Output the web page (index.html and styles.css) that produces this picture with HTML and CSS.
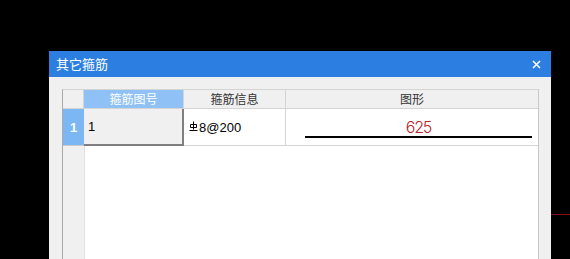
FILE: index.html
```html
<!DOCTYPE html>
<html lang="zh">
<head>
<meta charset="utf-8">
<title>其它箍筋</title>
<link rel="stylesheet" href="styles.css">
</head>
<body>
<div class="stage">
  <div class="redline"></div>
  <div class="dialog">
    <div class="titlebar">
      <span class="title">其它箍筋</span>
      <svg class="close" width="9" height="9" viewBox="0 0 9 9"><path d="M1 1 L8 8 M8 1 L1 8" stroke="#fff" stroke-width="1.5" fill="none"/></svg>
    </div>
    <div class="body">
      <div class="grid">
        <div class="row head">
          <div class="cell corner"></div>
          <div class="cell hsel">箍筋图号</div>
          <div class="cell">箍筋信息</div>
          <div class="cell last">图形</div>
        </div>
        <div class="row data">
          <div class="cell rownum">1</div>
          <div class="cell sel">1</div>
          <div class="cell info"><svg class="rebar" width="9" height="11" viewBox="0 0 9 11"><path d="M4.5 0.5 V8.5 M1.5 3.5 H7.5 V6.5 H1.5 Z M0.5 9.5 H8.5" stroke="#000" stroke-width="1" fill="none"/></svg><span>8@200</span></div>
          <div class="cell shape last"><span class="len">625</span><div class="bar"></div></div>
        </div>
        <div class="rest">
          <div class="restnum"></div>
          <div class="restfill"></div>
        </div>
      </div>
    </div>
  </div>
</div>
</body>
</html>
```
FILE: styles.css
```css
html, body {
  margin: 0;
  padding: 0;
  background: #000;
}
.stage {
  position: relative;
  width: 570px;
  height: 259px;
  overflow: hidden;
  padding-top: 51px;
  box-sizing: border-box;
  font-family: "Noto Sans CJK SC", "Liberation Sans", sans-serif;
}
.redline {
  position: absolute;
  left: 545px;
  top: 214px;
  width: 25px;
  height: 1px;
  background: #8a0c12;
}
.dialog {
  position: relative;
  margin-left: 49px;
  width: 502px;
  height: 208px;
  background: #f0f0f0;
  display: flex;
  flex-direction: column;
}
.titlebar {
  height: 26px;
  flex: none;
  background: #2c7fe1;
  display: flex;
  align-items: center;
  justify-content: space-between;
  padding: 0 10px 0 7px;
}
.title {
  color: #fff;
  font-size: 13px;
  line-height: 16px;
}
.close {
  display: block;
}
.body {
  flex: 1;
  padding: 12px 12px 0 13px;
  display: flex;
  min-height: 0;
}
.grid {
  width: 477px;
  box-sizing: border-box;
  border-left: 1px solid #a9a9a9;
  border-right: 1px solid #c8c8c8;
  border-top: 1px solid #d4d4d4;
  background: #fff;
  display: flex;
  flex-direction: column;
}
.row {
  display: grid;
  grid-template-columns: 21px 100px 102px 252px;
  flex: none;
}
.head {
  height: 19px;
}
.head .cell {
  background: #f0f0f0;
  border-right: 1px solid #d4d4d4;
  border-bottom: 1px solid #d4d4d4;
  box-sizing: border-box;
  font-size: 12px;
  color: #333;
  display: flex;
  align-items: center;
  justify-content: center;
  line-height: 14px;
}
.head .cell.hsel {
  background: #8fc1f6;
  color: #fff;
}
.head .cell.last, .data .cell.last {
  border-right: none;
}
.data {
  height: 37px;
}
.data .cell {
  box-sizing: border-box;
  border-right: 1px solid #d4d4d4;
  border-bottom: 1px solid #d4d4d4;
  display: flex;
  align-items: center;
  font-family: "Liberation Sans", sans-serif;
  font-size: 13px;
  color: #000;
}
.data .rownum {
  background: #7cb6f3;
  color: #fff;
  font-weight: bold;
  justify-content: center;
  border-right: none;
  border-bottom: 1px solid #c8c8c8;
}
.data .sel {
  background: #f0f0f0;
  border-right: 2px solid #7f7f7f;
  border-bottom: 2px solid #7f7f7f;
  padding-left: 4px;
}
.data .info {
  padding-left: 5px;
}
.rebar {
  display: block;
  align-self: flex-start;
  margin-top: 12px;
  margin-right: 1px;
}
.data .shape {
  flex-direction: column;
  align-items: stretch;
  justify-content: flex-end;
  padding: 0 6px 7px 19px;
}
.len {
  text-align: center;
  color: #b8232c;
  font-family: "Inter", "Liberation Sans", sans-serif;
  font-weight: 300;
  font-size: 16px;
  letter-spacing: -1.2px;
  line-height: 16px;
  margin-bottom: 1px;
}
.bar {
  height: 2px;
  background: #000;
}
.rest {
  flex: 1;
  display: flex;
}
.restnum {
  width: 21px;
  background: #f0f0f0;
  border-right: 1px solid #e2e2e2;
}
.restfill {
  flex: 1;
  background: #fff;
}
```
